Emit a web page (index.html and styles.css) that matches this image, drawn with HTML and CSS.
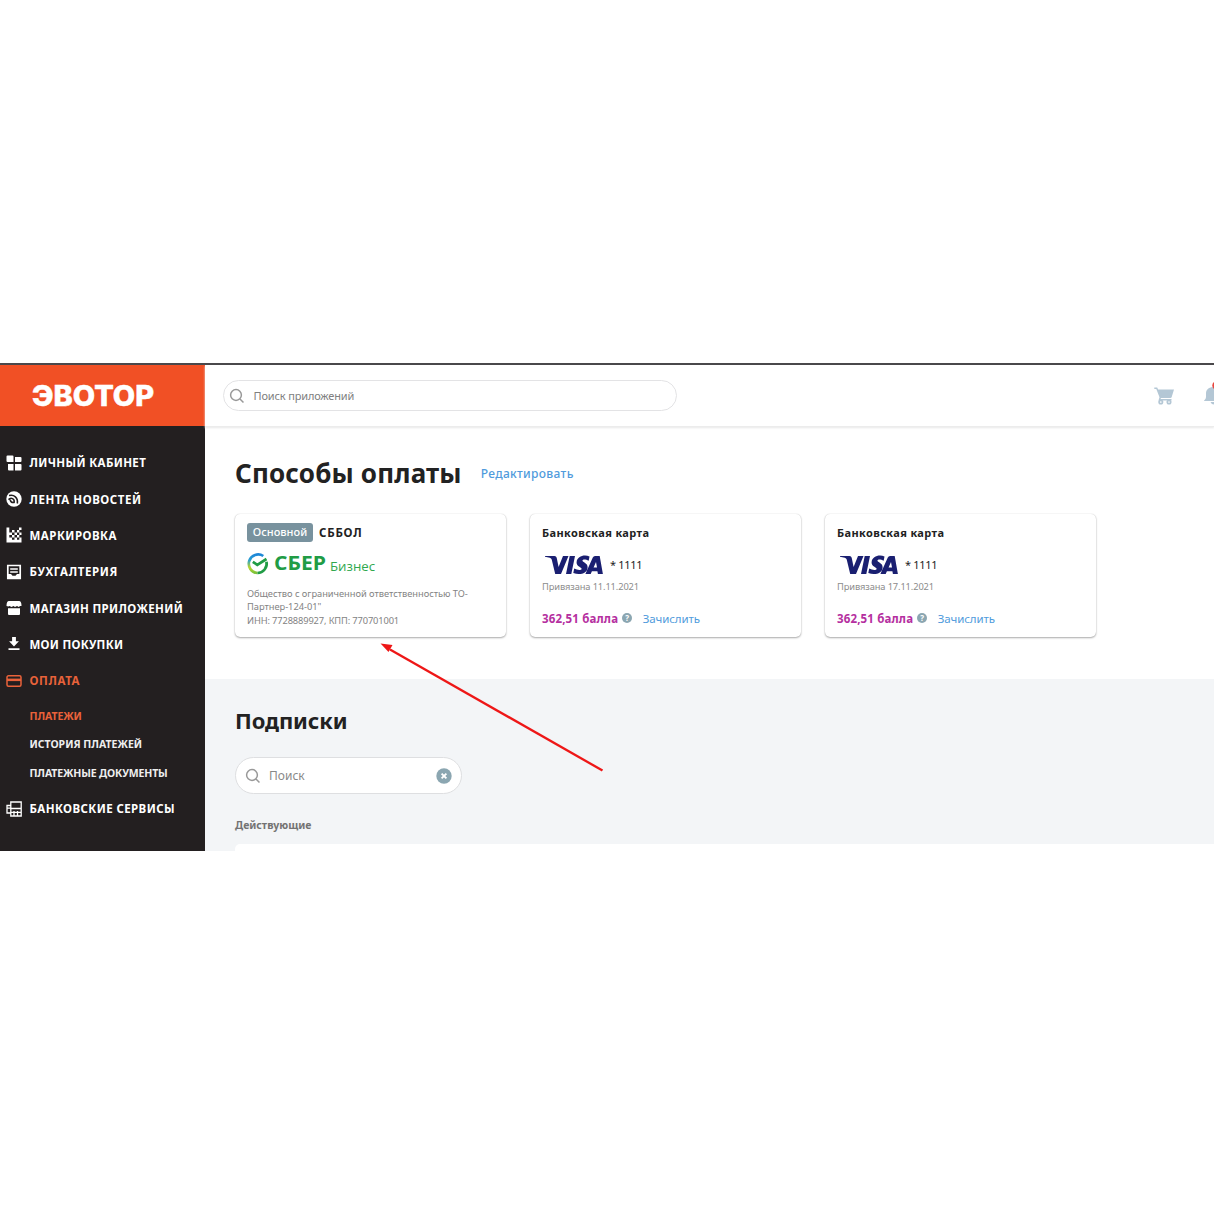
FILE: index.html
```html
<!DOCTYPE html>
<html lang="ru">
<head>
<meta charset="utf-8">
<title>Эвотор — Способы оплаты</title>
<link rel="stylesheet" href="styles.css">
</head>
<body>
<div class="app">
  <aside class="sidebar">
    <div class="brand"><svg width="128" height="40" viewBox="0 0 128 40"><text class="brand-text" x="1" y="30" textLength="122" lengthAdjust="spacingAndGlyphs">ЭВОТОР</text></svg></div>
    <nav class="menu">
      <a class="item"><svg class="icon" viewBox="0 0 16 16"><path fill="currentColor" d="M1.500.500h5a1 1 0 0 1 1 1v5.500h-6a1 1 0 0 1-1-1v-4.500a1 1 0 0 1 1-1zM9 2h5.500a1 1 0 0 1 1 1v3a1 1 0 0 1-1 1H9zM2 9h5.500v6.500H3a1 1 0 0 1-1-1zM9 9h5.500a1 1 0 0 1 1 1v4.500a1 1 0 0 1-1 1H9z"/></svg><span class="w1">ЛИЧНЫЙ КАБИНЕТ</span></a>
      <a class="item"><svg class="icon" viewBox="0 0 16 16"><circle cx="8" cy="8" r="7.700" fill="currentColor"/><path fill="none" stroke="#231f20" stroke-width="1.600" d="M3 4.600c5-1.400 9.300 2 8.300 7.900M2.500 8.600c2.500-2.600 6.300-1 5.600 2.800-2.200.5-3.700-.6-3.900-2.800"/></svg><span class="w2">ЛЕНТА НОВОСТЕЙ</span></a>
      <a class="item"><svg class="icon" viewBox="0 0 16 16"><path fill="currentColor" d="M.5.500h2.800v12.200h12.200v2.800H.5zM3.300 5.500H6V8H3.300zM6 3h2.500v2.500H6zM6 8h2.500v2.500H6zM8.500 5.500H11V8H8.500zM11 3h2.300v2.500H11zM13 .5h2.500V3H13zM11 8h2.300v2.500H11zM13.300 5.500h2.200V8h-2.200zM3.300 10.500H6V13H3.300zM8.500 10.500H11V13H8.500zM13.300 10.500h2.200V13h-2.200z"/></svg><span class="w3">МАРКИРОВКА</span></a>
      <a class="item"><svg class="icon" viewBox="0 0 16 16"><path fill="none" stroke="currentColor" stroke-width="1.700" d="M1.800 1.500h12.400v13H1.800zM4.200 5h7.600M4.200 8h7.600"/><path fill="currentColor" d="M1.500 10h3.500l1.500 1.700h3L11 10h3.500v5h-13z"/></svg><span class="w4">БУХГАЛТЕРИЯ</span></a>
      <a class="item"><svg class="icon" viewBox="0 0 16 16"><path fill="currentColor" d="M3 1h10q2.500 0 2.500 5H14l-1.200 1-1.800-1-2 1-1.500-1-2 1-2-1-1.200.500L.5 6Q.5 1 3 1zM2 8.300h12v5.700a1 1 0 0 1-1 1H3a1 1 0 0 1-1-1z"/></svg><span class="w5">МАГАЗИН ПРИЛОЖЕНИЙ</span></a>
      <a class="item"><svg class="icon" viewBox="0 0 16 16"><path fill="currentColor" d="M6.100 1h3.800v4.300h3L8 10.500 3.100 5.300h3zM2.500 12.200h11v1.800h-11z"/></svg><span class="w6">МОИ ПОКУПКИ</span></a>
      <a class="item active"><svg class="icon" viewBox="0 0 16 16"><rect x="1" y="2.800" width="14" height="10.400" rx="1.500" fill="none" stroke="currentColor" stroke-width="1.500"/><path fill="currentColor" d="M1 5.600h14v2.500H1z"/></svg><span class="w7">ОПЛАТА</span></a>
      <div class="submenu">
        <a class="subitem active"><span class="s1">ПЛАТЕЖИ</span></a>
        <a class="subitem"><span class="s2">ИСТОРИЯ ПЛАТЕЖЕЙ</span></a>
        <a class="subitem"><span class="s3">ПЛАТЕЖНЫЕ ДОКУМЕНТЫ</span></a>
      </div>
      <a class="item"><svg class="icon" viewBox="0 0 16 16"><path fill="none" stroke="currentColor" stroke-width="1.300" d="M4.800 1h10.400v14H4.800zM4.800 7.500h10.400M8 10v5M11.500 10v5M5 11.300h10M4.800 4.500H1v7.500h3.800M1 7.200h3.800"/></svg><span class="w8">БАНКОВСКИЕ СЕРВИСЫ</span></a>
    </nav>
  </aside>
  <div class="main">
    <header class="topbar">
      <label class="search"><svg class="lens" viewBox="0 0 16 16"><circle cx="7" cy="7" r="5.400"/><path d="M11 11l3.500 3.500"/></svg><span>Поиск приложений</span></label>
      <div class="tools">
        <svg width="20" height="18" viewBox="0 0 20 18"><path fill="#b4c7d5" d="M.3.500h2.900l.9 2H20l-2.300 7.600q-.3.900-1.200.9H7l-.5 1h11v1.500h-13l1-3.300L2.300 2H.3z"/><circle cx="6.800" cy="15" r="1.700" fill="#fff" stroke="#b4c7d5" stroke-width="1.700"/><circle cx="15" cy="15" r="1.700" fill="#fff" stroke="#b4c7d5" stroke-width="1.700"/></svg>
        <svg width="10" height="26" viewBox="0 0 10 26"><path fill="#b4c7d5" d="M0 21c0-1 2-1.500 2-4v-3.500c0-4 2.800-6.500 8-6.500v14zM6.500 22H10v2.500q-2.500 0-3.500-2.500z"/><circle cx="12.500" cy="5.500" r="4.200" fill="#e8473f"/></svg>
      </div>
    </header>
    <section class="payments">
      <div class="heading"><h1>Способы оплаты</h1><a class="link edit">Редактировать</a></div>
      <div class="cards">
        <article class="card">
          <div class="card-title"><span class="badge">Основной</span><span class="sbbol">СББОЛ</span></div>
          <div class="sber">
            <svg width="22" height="22" viewBox="0 0 22 22"><defs><linearGradient id="ring" x1="0" y1="0" x2="0" y2="1"><stop offset="0" stop-color="#1d86d8"/><stop offset=".3" stop-color="#2aa0d0"/><stop offset=".7" stop-color="#b9d52e"/><stop offset="1" stop-color="#7cc23a"/></linearGradient></defs><path fill="none" stroke="url(#ring)" stroke-width="2.700" d="M16.300 3A9.300 9.300 0 1 0 10.500 20"/><path fill="none" stroke="#219c45" stroke-width="2.700" d="M10.500 20A9.300 9.300 0 0 0 19.500 8.800"/><path fill="none" stroke="#219c45" stroke-width="2.700" d="M5.800 8.800l4.500 3L19.500 6"/></svg>
            <svg width="106" height="28" viewBox="0 0 106 28"><text class="sber-text" x="0" y="20.200" textLength="52" lengthAdjust="spacingAndGlyphs">СБЕР</text><text class="biz-text" x="56" y="20.700" textLength="45" lengthAdjust="spacingAndGlyphs">Бизнес</text></svg>
          </div>
          <p class="company">Общество с ограниченной ответственностью ТО-<br>Партнер-124-01"<br><span class="inn">ИНН: 7728889927, КПП: 770701001</span></p>
        </article>
        <article class="card">
          <div class="card-title title-text">Банковская карта</div>
          <div class="visa"><svg width="60" height="20" viewBox="0 0 60 20"><path fill="#1a1f71" d="M2 1h9.500q1.800 0 2.200 1.800L15.600 12 20 1h5.500L18 19h-5.800L8.700 4.600Q8.300 3.200 6.800 2.700L2 1.700zM26.700 1h5.300l-3.700 18h-5.300zM46.500 1.500l-.8 4.200c-3.200-1.600-6-1.400-6.200-.1-.2 1.700 5.400 2.200 5.100 6.900-.3 6.200-8.100 7.900-14.300 5.500l.9-4.400c3 1.700 7.100 1.900 7.400.3.300-1.800-5.300-2-5-6.700.4-5.800 7.500-8 12.900-5.700zM52 1h4.700l3.200 18h-5l-.5-2.700h-5.500L47.700 19h-5.300L49.800 2.500Q50.500 1 52 1zM53 7L50.600 12.600h3.400z"/></svg><span class="number">* 1111</span></div>
          <div class="date">Привязана 11.11.2021</div>
          <div class="bonus"><b>362,51 балла</b><i class="hint">?</i><a class="link">Зачислить</a></div>
        </article>
        <article class="card">
          <div class="card-title title-text">Банковская карта</div>
          <div class="visa"><svg width="60" height="20" viewBox="0 0 60 20"><path fill="#1a1f71" d="M2 1h9.500q1.800 0 2.200 1.800L15.600 12 20 1h5.500L18 19h-5.800L8.700 4.600Q8.300 3.200 6.800 2.700L2 1.700zM26.700 1h5.300l-3.700 18h-5.300zM46.500 1.500l-.8 4.200c-3.200-1.600-6-1.400-6.200-.1-.2 1.700 5.400 2.200 5.100 6.900-.3 6.200-8.100 7.900-14.300 5.500l.9-4.400c3 1.700 7.100 1.900 7.400.3.300-1.800-5.300-2-5-6.700.4-5.800 7.500-8 12.900-5.700zM52 1h4.700l3.200 18h-5l-.5-2.700h-5.500L47.700 19h-5.300L49.800 2.500Q50.500 1 52 1zM53 7L50.600 12.600h3.400z"/></svg><span class="number">* 1111</span></div>
          <div class="date">Привязана 17.11.2021</div>
          <div class="bonus"><b>362,51 балла</b><i class="hint">?</i><a class="link">Зачислить</a></div>
        </article>
      </div>
    </section>
    <section class="subs">
      <h2>Подписки</h2>
      <label class="find"><svg class="lens" viewBox="0 0 16 16"><circle cx="7" cy="7" r="5.400"/><path d="M11 11l3.500 3.500"/></svg><span>Поиск</span><svg class="clear" viewBox="0 0 16 16"><circle cx="8" cy="8" r="7.700" fill="#8ba6b1"/><path stroke="#fff" stroke-width="1.900" d="M5.600 5.600l4.800 4.800M10.400 5.600l-4.800 4.800"/></svg></label>
      <h3>Действующие</h3>
      <div class="list"></div>
    </section>
  </div>
  <svg class="arrow" width="226" height="132" viewBox="0 0 226 132"><path stroke="#ee1717" stroke-width="2.300" d="M10 7.500L222.500 128.500"/><path fill="#ee1717" d="M.5 1.500L12.500 3 8.500 10z"/></svg>
</div>
</body>
</html>
```

FILE: styles.css
```css
* { box-sizing: border-box; }
body {
  margin: 0;
  padding-top: 363px;
  background: #fff;
  font-family: "Noto Sans", "Open Sans", sans-serif;
  color: #222;
}
svg { display: block; flex: none; }
span, b, a { white-space: nowrap; }
.app {
  position: relative;
  display: flex;
  height: 488px;
  border-top: 2px solid #4a484b;
  overflow: hidden;
}

/* Sidebar */
.sidebar { width: 205px; flex: none; background: #231f20; }
.brand {
  height: 61px;
  padding: 11px 0 0 31px;
  background: #f15025;
}
.brand-text { font: 800 28px Inter, sans-serif; fill: #fff; stroke: #fff; stroke-width: .5px; }
.menu { padding-top: 18.500px; }
.item {
  display: flex;
  align-items: center;
  gap: 7.500px;
  height: 36.350px;
  padding-left: 6px;
  color: #fff;
  font-size: 11.500px;
  font-weight: 700;
}
.icon { width: 16px; height: 16px; }
.w1 { letter-spacing: .35px; }
.w2 { letter-spacing: .55px; }
.w3 { letter-spacing: .48px; }
.w4 { letter-spacing: .6px; }
.w5 { letter-spacing: .35px; }
.w6 { letter-spacing: .27px; }
.w7 { letter-spacing: .6px; }
.w8 { letter-spacing: .4px; }
.s1 { letter-spacing: -.1px; }
.s3 { letter-spacing: -.15px; }
.item.active, .subitem.active { color: #e9623a; }
.submenu { padding: 2.500px 0 3px; }
.subitem {
  display: flex;
  align-items: center;
  height: 28.700px;
  padding-left: 29.500px;
  color: #eee;
  font-size: 10.500px;
  font-weight: 700;
}

/* Top bar */
.main { flex: 1; min-width: 0; }
.topbar {
  display: flex;
  justify-content: space-between;
  height: 62px;
  padding: 15px 0 0 17.500px;
  border-bottom: 1px solid #ececec;
  box-shadow: 0 1px 2px #e8e8e8;
}
.search {
  display: flex;
  align-items: center;
  gap: 9px;
  width: 454.500px;
  height: 31px;
  padding-left: 5px;
  border: 1px solid #e3e3e5;
  border-radius: 16px;
  font-size: 11px;
  letter-spacing: -.15px;
  color: #808080;
}
.lens { width: 16px; height: 16px; fill: none; stroke: #999; stroke-width: 1.500; }
.tools { display: flex; gap: 30px; }
.tools svg:first-child { margin-top: 7px; }

/* Payment methods */
.payments { height: 252px; padding: 26px 0 0 30px; }
.heading { display: flex; align-items: center; height: 40px; gap: 19px; }
h1, h2, h3 { margin: 0; color: #222; white-space: nowrap; }
h1 { font-size: 26px; line-height: 40px; letter-spacing: .17px; }
.link { color: #509bdc; font-size: 11.500px; letter-spacing: -.1px; }
.edit { font-weight: 500; font-size: 12px; letter-spacing: .33px; }
.cards { display: flex; gap: 24px; margin-top: 21px; }
.card {
  width: 271px;
  height: 123px;
  padding: 9px 12px;
  border-radius: 5px;
  box-shadow: 0 1px 2px #aaa, 0 0 1px #ccc;
}
.card-title {
  display: flex;
  align-items: center;
  gap: 6px;
  height: 19px;
  font-size: 11.500px;
  font-weight: 700;
}
.title-text { font-size: 11px; letter-spacing: .38px; }
.sbbol { letter-spacing: .75px; }
.badge {
  width: 66px;
  height: 19px;
  border-radius: 3px;
  background: #78929e;
  color: #fff;
  font-size: 11px;
  font-weight: 500;
  line-height: 18px;
  text-align: center;
}
.sber { display: flex; gap: 5px; height: 22px; margin-top: 11px; }
.sber svg:last-child { margin-top: -3px; }
.sber-text { font: 700 19px "Open Sans", sans-serif; fill: #219c45; }
.biz-text { font: 13.500px "Open Sans", sans-serif; fill: #30a84e; }
.company { margin: 11.500px 0 0; color: #838383; font-size: 9.300px; letter-spacing: -.03px; line-height: 13.500px; white-space: nowrap; }
.inn { letter-spacing: -.13px; }
.visa { display: flex; align-items: center; gap: 7px; height: 20px; margin-top: 13px; padding-left: 1px; }
.number { font-size: 11px; letter-spacing: -.3px; position: relative; top: -.5px; }
.date { margin-top: 5px; color: #8c8c8c; font-size: 9.300px; letter-spacing: -.12px; line-height: 14px; }
.bonus { display: flex; align-items: center; height: 18px; margin-top: 15px; }
.bonus b { color: #b52fa0; font-size: 11.500px; letter-spacing: .15px; }
.hint {
  width: 10px;
  height: 10px;
  margin: 0 10.500px 0 4px;
  border-radius: 50%;
  background: #8ba6b1;
  color: #fff;
  font: 700 8px/10px "Noto Sans", sans-serif;
  text-align: center;
}

/* Subscriptions */
.subs { height: 172px; padding: 24px 0 0 30px; background: #f3f5f7; }
h2 { font-size: 22px; line-height: 34px; letter-spacing: -.1px; }
.find {
  display: flex;
  align-items: center;
  width: 227px;
  height: 37px;
  margin-top: 20px;
  padding: 0 9px;
  border: 1px solid #dedfe1;
  border-radius: 19px;
  background: #fff;
  color: #898989;
  font-size: 12px;
}
.find span { margin-left: 8px; }
.clear { width: 16px; height: 16px; margin-left: auto; }
h3 { margin-top: 23px; color: #737373; font-size: 10.500px; line-height: 16px; }
.list { height: 20px; margin-top: 11px; border-top-left-radius: 5px; background: #fff; }

/* Pointer drawn over the page */
.arrow { position: absolute; left: 380px; top: 277px; }
```
